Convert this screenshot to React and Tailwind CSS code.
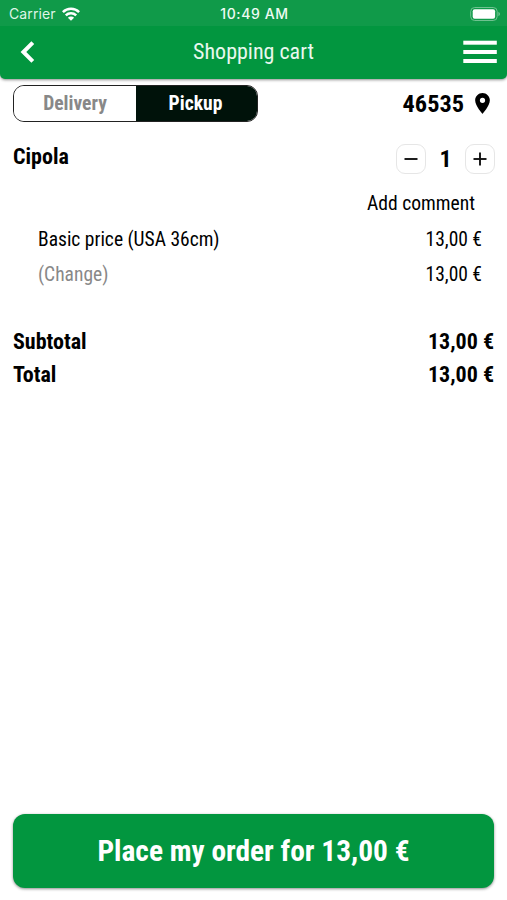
function Price({ children }) {
  return <span className="whitespace-nowrap">{children}</span>;
}

function StepButton({ plus }) {
  return (
    <button className="flex h-[30px] w-[30px] items-center justify-center rounded-[9px] border border-[#e6e6e6] bg-white">
      <svg width="14" height="14" viewBox="0 0 14 14" stroke="#111" strokeWidth="1.9">
        <path d="M0.5 7H13.5" />
        {plus && <path d="M7 0.5V13.5" />}
      </svg>
    </button>
  );
}

export default function App() {
  return (
    <div className="flex h-[900px] w-full flex-col overflow-hidden bg-white font-['Roboto_Condensed','Roboto',sans-serif] text-black [font-stretch:75%]">
      <header className="h-[79px] shrink-0 rounded-b-[5px] bg-[#02963f] text-white shadow-[0_1px_3px_rgba(0,0,0,0.45)]">
        <div className="grid h-[26px] grid-cols-3 items-center bg-[#109a49] pr-[7px] pl-[9px] font-['Inter',sans-serif] text-[14px] leading-[27px] [font-stretch:100%]">
          <div className="flex items-center gap-[6px] text-[#dff5e7]">
            <span className="tracking-[0.1px]">Carrier</span>
            <svg width="18" height="14" viewBox="0 0 18 14" fill="none" stroke="#fff" strokeWidth="2.5">
              <path d="M0.9 5.1A11.5 11.5 0 0 1 17.1 5.1" />
              <path d="M3.8 8.3A7.4 7.4 0 0 1 14.2 8.3" />
              <path d="M9 13.8L5.9 10.7A4.4 4.4 0 0 1 12.1 10.7Z" fill="#fff" stroke="none" />
            </svg>
          </div>
          <span className="text-center font-medium tracking-[0.6px] whitespace-nowrap text-[#effaf3]">10:49 AM</span>
          <svg className="justify-self-end" width="30" height="14" viewBox="0 0 30 14">
            <rect x="0.7" y="0.5" width="26.5" height="13" rx="4" fill="none" stroke="#6fc290" />
            <rect x="2.7" y="2.3" width="22.4" height="9.4" rx="2" fill="#fff" />
            <path d="M28.4 4.7Q30 5.4 30 7T28.4 9.3Z" fill="#6fc290" />
          </svg>
        </div>
        <div className="grid h-[52px] grid-cols-[60px_1fr_60px] items-center pr-[10px] pl-[20px]">
          <svg width="15" height="22" viewBox="0 0 15 22" fill="none" stroke="#fff" strokeWidth="4">
            <path d="M12.8 1.6L3.4 11L12.8 20.4" />
          </svg>
          <h1 className="pr-[10px] text-center text-[22px] leading-[26px] text-[#e9f8ee]">Shopping cart</h1>
          <svg className="justify-self-end" width="34" height="24" viewBox="0 0 34 24" fill="#fff">
            <rect x="0.3" y="0.7" width="33.5" height="4" />
            <rect x="0.3" y="10" width="33.5" height="4" />
            <rect x="0.3" y="19" width="33.5" height="4" />
          </svg>
        </div>
      </header>

      <main className="flex flex-1 flex-col px-[13px]">
        <div className="mt-[6px] flex h-[37px] items-center justify-between">
          <div className="flex h-[37px] w-[245px] overflow-hidden rounded-[11px] border border-[#222] text-[19.6px] leading-[35px] font-bold">
            <button className="w-[122px] bg-white text-[#888]">Delivery</button>
            <button className="flex-1 bg-[#00120a] pr-[2px] text-white">Pickup</button>
          </div>
          <div className="flex items-center gap-[11px] pr-[4px]">
            <span className="pt-[1px] text-[24.3px] leading-[36px] font-bold">46535</span>
            <svg width="15" height="21" viewBox="0 0 14 20" fill="#000">
              <path fillRule="evenodd" d="M7 0C3.13 0 0 3.13 0 7c0 5.25 7 13 7 13s7-7.75 7-13c0-3.87-3.13-7-7-7Zm0 9.5a2.5 2.5 0 1 1 0-5 2.5 2.5 0 0 1 0 5Z" />
            </svg>
          </div>
        </div>

        <div className="mt-[21px] -mr-[1px] flex h-[31px] items-center justify-between">
          <h2 className="-mt-[5px] text-[22px] font-bold">Cipola</h2>
          <div className="flex items-center">
            <StepButton />
            <span className="w-[39px] text-center text-[24px] font-bold">1</span>
            <StepButton plus />
          </div>
        </div>

        <div className="mt-[12px] mr-[7px] pr-[12px] text-right text-[19.6px] leading-[36px]">Add comment</div>
        <div className="flex justify-between pr-[12px] pl-[25px] text-[19.5px] leading-[36px]">
          <span>Basic price (USA 36cm)</span>
          <Price>13,00 €</Price>
        </div>
        <div className="flex justify-between pr-[12px] pl-[25px] text-[19.5px] leading-[34px]">
          <span className="text-[#888]">(Change)</span>
          <Price>13,00 €</Price>
        </div>

        <div className="mt-[33px] text-[22px] leading-[33px] font-bold">
          <div className="flex justify-between">
            <span>Subtotal</span>
            <Price>13,00 €</Price>
          </div>
          <div className="flex justify-between">
            <span>Total</span>
            <Price>13,00 €</Price>
          </div>
        </div>

        <button className="mt-auto mb-[12px] h-[74px] rounded-[12px] bg-[#02963f] pt-[1px] text-[29.4px] font-bold text-white shadow-[0_1px_3px_rgba(0,0,0,0.45)]">
          Place my order for 13,00 €
        </button>
      </main>
    </div>
  );
}
